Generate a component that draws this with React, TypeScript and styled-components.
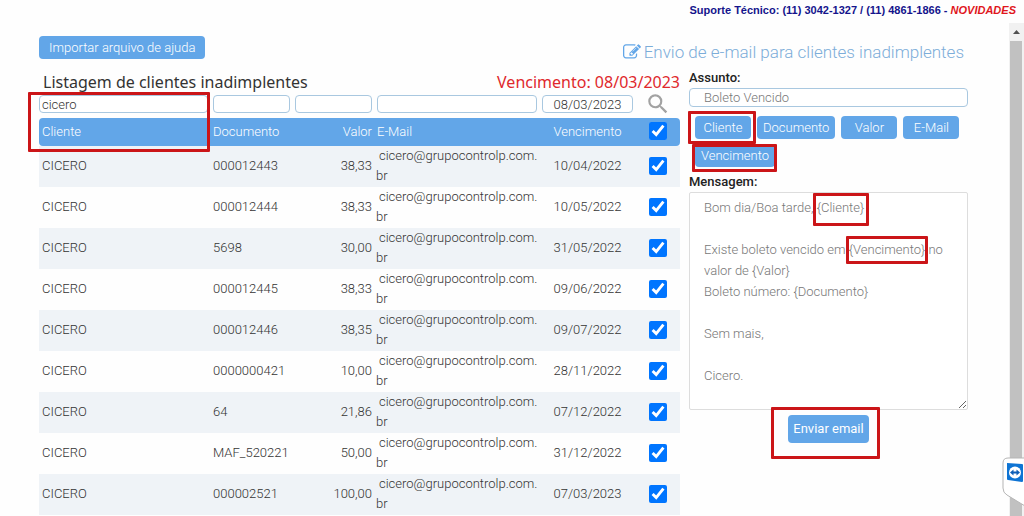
import React, { useState } from "react";
import styled, { createGlobalStyle, css } from "styled-components";
import { MdSearch } from "react-icons/md";

const GlobalStyle = createGlobalStyle`
  * { box-sizing: border-box; }
  body {
    margin: 0;
    background: #fefefe;
    color: #333;
    font-family: Roboto, "Liberation Sans", sans-serif;
    font-size: 13px;
    font-weight: 300;
  }
  input, textarea, button { font: inherit; color: inherit; }
`;

const Page = styled.div`
  display: flex;
  flex-direction: column;
  min-height: 100vh;
`;

const SupportBar = styled.header`
  height: 23px;
  padding: 0 8px;
  text-align: right;
  font: bold 11px/20px "Liberation Sans", Arial, sans-serif;
  color: #14148c;
`;

const NewsLink = styled.a`
  color: #e0161c;
  font-style: italic;
  text-decoration: none;
`;

const Viewport = styled.div`
  display: flex;
  flex: 1;
`;

const Columns = styled.main`
  flex: 1;
  display: grid;
  grid-template-columns: minmax(0, 641fr) minmax(0, 279fr);
  gap: 9px;
  padding: 13px 41px 2px 39px;
`;

const ListPanel = styled.section`
  display: flex;
  flex-direction: column;
  align-items: flex-start;
`;

const MailPanel = styled.section`
  display: flex;
  flex-direction: column;
`;

const Button = styled.button<{ $tall?: boolean; $wide?: boolean }>`
  min-width: 56px;
  height: ${(p) => (p.$tall ? 28 : 23)}px;
  padding: 0 ${(p) => (p.$wide ? 10 : p.$tall ? 5 : 6)}px;
  border: 0;
  border-radius: 4px;
  background: #62a6e8;
  color: #fff;
  line-height: 20px;
  font-weight: ${(p) => (p.$tall ? 400 : 300)};
  white-space: nowrap;
`;

const ListHeading = styled.div`
  display: flex;
  justify-content: space-between;
  align-self: stretch;
  margin-top: 11px;
  padding-left: 4px;
  font: 400 16px/24px "Noto Sans", "Open Sans", sans-serif;
`;

const ListTitle = styled.h2`
  margin: 0;
  font: inherit;
`;

const DueDate = styled.span`
  color: #e0282c;
`;

const Marked = styled.span`
  position: relative;
  display: inline-flex;
`;

/* Red frame laid over the content that it points out. */
const Frame = styled.span<{ $top: number; $left: number; $width: number; $height: number }>`
  position: absolute;
  top: ${(p) => p.$top}px;
  left: ${(p) => p.$left}px;
  width: ${(p) => p.$width}px;
  height: ${(p) => p.$height}px;
  border: 3px solid #cb1518;
  border-radius: 1px;
  pointer-events: none;
  z-index: 1;
`;

const TableArea = styled.div`
  position: relative;
  align-self: stretch;
`;

const Table = styled.table`
  width: 100%;
  table-layout: fixed;
  border-collapse: separate;
  border-spacing: 0;
`;

const Col = styled.col<{ $width?: number }>`
  ${(p) => p.$width && css`width: ${p.$width}px;`}
`;

type Align = "left" | "right" | "center";

const FilterCell = styled.td<{ $first?: boolean }>`
  height: 24px;
  padding: 1px 3px 5px ${(p) => (p.$first ? 0 : 2)}px;
  line-height: 0;
`;

const HeadCell = styled.th<{ $align?: Align }>`
  height: 28px;
  padding: 0 3px 2px 2px;
  background: #62a6e8;
  color: #fff;
  font-weight: 300;
  text-align: ${(p) => p.$align ?? "left"};
  &:first-child { border-radius: 4px 0 0 4px; padding-left: 3px; }
  &:last-child { border-radius: 0 4px 4px 0; }
`;

const Row = styled.tr`
  height: 41px;
  &:nth-child(odd) { background: #eff3f7; }
`;

const Cell = styled.td<{ $align?: Align }>`
  padding: 0 3px 2px 2px;
  line-height: 20px;
  text-align: ${(p) => p.$align ?? "left"};
  &:first-child { padding-left: 3px; }
`;

const EmailCell = styled(Cell)`
  padding: 0 1px;
  text-indent: 3px;
  word-break: break-all;
  vertical-align: top;
`;

const TextInput = styled.input<{ $align?: Align; $indent?: number }>`
  display: block;
  width: 100%;
  height: 18px;
  padding: 0 ${(p) => p.$indent ?? 2}px;
  border: 1px solid #a9c8e0;
  border-radius: 4px;
  background: #fff;
  line-height: 16px;
  text-align: ${(p) => p.$align ?? "left"};
  outline: none;
`;

const SubjectInput = styled(TextInput)`
  height: 19px;
  color: #777;
`;

const Check = styled.input`
  display: block;
  width: 18px;
  height: 18px;
  margin: 0 auto;
  accent-color: #0075ff;
`;

const SearchButton = styled.button`
  display: flex;
  align-items: center;
  justify-content: center;
  width: 100%;
  height: 18px;
  padding: 0;
  border: 0;
  background: none;
  color: #a2a2a2;
  svg { flex: none; }
`;

const MailTitle = styled.h1`
  display: flex;
  align-items: center;
  align-self: flex-end;
  gap: 3px;
  margin: 0 4px 0 0;
  color: #7cadd9;
  font-size: 17px;
  font-weight: 300;
  line-height: 32px;
  white-space: nowrap;
`;

const Label = styled.label`
  color: #222;
  font-weight: 500;
  line-height: 20px;
`;

const Tags = styled.div`
  display: flex;
  flex-wrap: wrap;
  gap: 5px 6px;
  padding: 9px 0 5px 6px;
`;

const MessageArea = styled.div`
  position: relative;
  display: flex;
`;

const Message = styled.textarea`
  flex: 1;
  min-width: 0;
  height: 218px;
  padding: 4px 14px;
  border: 1px solid #ddd;
  border-radius: 2px;
  background: #fff;
  color: #777;
  line-height: 21px;
  outline: none;
  overflow: hidden;
`;

const SendRow = styled.div`
  display: flex;
  justify-content: center;
  padding-top: 5px;
`;

const ScrollTrack = styled.div`
  width: 15px;
  padding: 0 2px 0 1px;
  background: #f1f1f1;
  display: flex;
  flex-direction: column;
`;

const ScrollArrow = styled.svg`
  height: 18px;
  width: 12px;
  fill: #505050;
`;

const ScrollThumb = styled.div`
  flex: 1;
  background: #c1c1c1;
`;

const RemoteBadge = styled.svg`
  position: fixed;
  right: 0;
  bottom: 0;
  z-index: 2;
`;

const EditIcon = () => (
  <svg width="18" height="18" viewBox="0 0 1792 1792" fill="#62a6e8" aria-hidden="true">
    <path d="M888 1184l116-116-152-152-116 116v56h96v96h56zm440-720q-16-16-33 1l-350 350q-17 17-1 33t33-1l350-350q17-17 1-33zm80 594v190q0 119-84.5 203.5t-203.5 84.5h-832q-119 0-203.5-84.5t-84.5-203.5v-832q0-119 84.5-203.5t203.5-84.5h832q63 0 117 25 15 7 18 23 3 17-9 29l-49 49q-14 14-32 8-23-6-45-6h-832q-66 0-113 47t-47 113v832q0 66 47 113t113 47h832q66 0 113-47t47-113v-126q0-13 9-22l64-64q15-15 35-7t20 29zm-96-738l288 288-672 672h-288v-288zm444 132l-92 92-288-288 92-92q28-28 68-28t68 28l152 152q28 28 28 68t-28 68z" />
  </svg>
);

const clients = [
  { doc: "000012443", value: "38,33", due: "10/04/2022" },
  { doc: "000012444", value: "38,33", due: "10/05/2022" },
  { doc: "5698", value: "30,00", due: "31/05/2022" },
  { doc: "000012445", value: "38,33", due: "09/06/2022" },
  { doc: "000012446", value: "38,35", due: "09/07/2022" },
  { doc: "0000000421", value: "10,00", due: "28/11/2022" },
  { doc: "64", value: "21,86", due: "07/12/2022" },
  { doc: "MAF_520221", value: "50,00", due: "31/12/2022" },
  { doc: "000002521", value: "100,00", due: "07/03/2023" },
];

const initialMessage = `Bom dia/Boa tarde, {Cliente}

Existe boleto vencido em {Vencimento} no valor de {Valor}
Boleto número: {Documento}

Sem mais,

Cicero.`;

export default function App() {
  const [message, setMessage] = useState(initialMessage);
  const [selected, setSelected] = useState(clients.map(() => true));
  const insert = (tag: string) => () => setMessage((m) => `${m}{${tag}}`);

  return (
    <Page>
      <GlobalStyle />
      <SupportBar>
        Suporte Técnico: (11) 3042-1327 / (11) 4861-1866 - <NewsLink href="#novidades">NOVIDADES</NewsLink>
      </SupportBar>
      <Viewport>
        <Columns>
          <ListPanel>
            <Button type="button" $wide>Importar arquivo de ajuda</Button>
            <ListHeading>
              <ListTitle>Listagem de clientes inadimplentes</ListTitle>
              <DueDate>Vencimento: 08/03/2023</DueDate>
            </ListHeading>
            <TableArea>
              <Table>
                <colgroup>
                  <Col />
                  <Col $width={82} />
                  <Col $width={82} />
                  <Col $width={165} />
                  <Col $width={96} />
                  <Col $width={44} />
                </colgroup>
                <thead>
                  <tr>
                    <FilterCell $first><TextInput aria-label="Filtrar cliente" defaultValue="cicero" /></FilterCell>
                    <FilterCell><TextInput aria-label="Filtrar documento" /></FilterCell>
                    <FilterCell><TextInput aria-label="Filtrar valor" /></FilterCell>
                    <FilterCell><TextInput aria-label="Filtrar e-mail" /></FilterCell>
                    <FilterCell><TextInput aria-label="Filtrar vencimento" defaultValue="08/03/2023" $align="center" /></FilterCell>
                    <FilterCell>
                      <SearchButton type="button" aria-label="Pesquisar"><MdSearch size={26} /></SearchButton>
                    </FilterCell>
                  </tr>
                  <tr>
                    <HeadCell>Cliente</HeadCell>
                    <HeadCell>Documento</HeadCell>
                    <HeadCell $align="right">Valor</HeadCell>
                    <HeadCell>E-Mail</HeadCell>
                    <HeadCell $align="center">Vencimento</HeadCell>
                    <HeadCell>
                      <Check
                        type="checkbox"
                        aria-label="Selecionar todos"
                        checked={selected.every(Boolean)}
                        onChange={(e) => setSelected(clients.map(() => e.target.checked))}
                      />
                    </HeadCell>
                  </tr>
                </thead>
                <tbody>
                  {clients.map((c, i) => (
                    <Row key={c.doc}>
                      <Cell>CICERO</Cell>
                      <Cell>{c.doc}</Cell>
                      <Cell $align="right">{c.value}</Cell>
                      <EmailCell>cicero@grupocontrolp.com.br</EmailCell>
                      <Cell $align="center">{c.due}</Cell>
                      <Cell>
                        <Check
                          type="checkbox"
                          aria-label={`Selecionar ${c.doc}`}
                          checked={selected[i]}
                          onChange={() => setSelected((s) => s.map((v, j) => (j === i ? !v : v)))}
                        />
                      </Cell>
                    </Row>
                  ))}
                </tbody>
              </Table>
              <Frame $top={-2} $left={-11} $width={182} $height={60} />
            </TableArea>
          </ListPanel>

          <MailPanel>
            <MailTitle><EditIcon />Envio de e-mail para clientes inadimplentes</MailTitle>
            <Label htmlFor="assunto">Assunto:</Label>
            <SubjectInput id="assunto" defaultValue="Boleto Vencido" $indent={14} />
            <Tags>
              <Marked>
                <Button type="button" onClick={insert("Cliente")}>Cliente</Button>
                <Frame $top={-5} $left={-7} $width={68} $height={33} />
              </Marked>
              <Button type="button" onClick={insert("Documento")}>Documento</Button>
              <Button type="button" onClick={insert("Valor")}>Valor</Button>
              <Button type="button" onClick={insert("E-Mail")}>E-Mail</Button>
              <Marked>
                <Button type="button" onClick={insert("Vencimento")}>Vencimento</Button>
                <Frame $top={0} $left={-3} $width={85} $height={28} />
              </Marked>
            </Tags>
            <Label htmlFor="mensagem">Mensagem:</Label>
            <MessageArea>
              <Message id="mensagem" value={message} onChange={(e) => setMessage(e.target.value)} />
              <Frame $top={1} $left={124} $width={56} $height={33} />
              <Frame $top={44} $left={157} $width={82} $height={28} />
            </MessageArea>
            <SendRow>
              <Marked>
                <Button type="button" $tall>Enviar email</Button>
                <Frame $top={-8} $left={-17} $width={109} $height={52} />
              </Marked>
            </SendRow>
          </MailPanel>
        </Columns>
        <ScrollTrack aria-hidden="true">
          <ScrollArrow viewBox="0 0 12 18"><path d="M3 11h7L6.500 7z" /></ScrollArrow>
          <ScrollThumb />
        </ScrollTrack>
      </Viewport>
      <RemoteBadge width="22" height="60" viewBox="0 0 22 60" role="img" aria-label="TeamViewer">
        <path d="M23 2H6Q1 2 1 7V32Q1 37 5 39L23 50Z" fill="#fff" stroke="#b5b5b5" />
        <path d="M5 7L20 8Q21 8 21 9V25Q21 26 20 26L6 24Q5 24 5 23Z" fill="#0e74d4" />
        <ellipse cx="13" cy="16.500" rx="6" ry="6" fill="#fff" />
        <path d="M8 16.500l3.500-3v2h3v-2l3.500 3-3.500 3v-2h-3v2z" fill="#0e5fb8" />
      </RemoteBadge>
    </Page>
  );
}
